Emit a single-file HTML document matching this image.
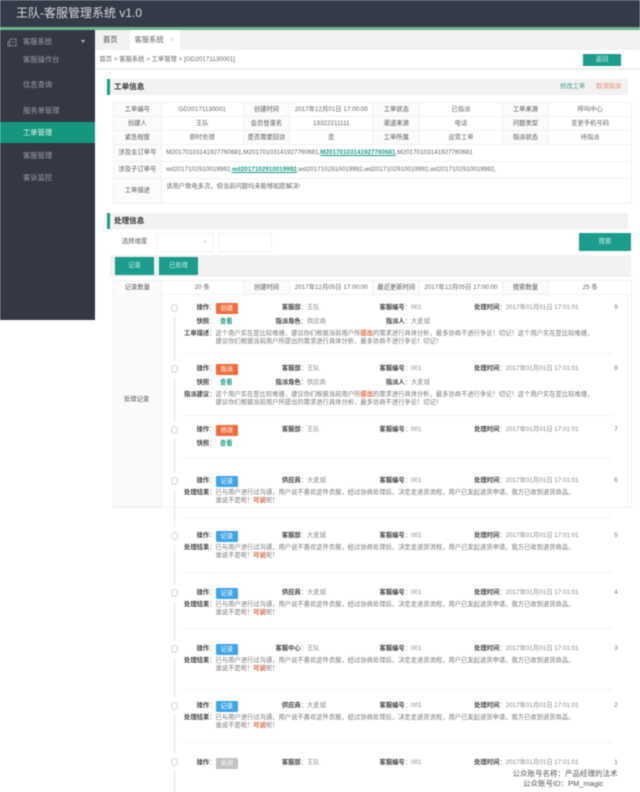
<!DOCTYPE html>
<html lang="zh"><head><meta charset="utf-8"><title>客服管理系统</title>
<style>
html,body{margin:0;padding:0;background:#fff}
#w{position:relative;width:640px;height:792px;overflow:hidden;background:#fff;font-family:"Liberation Sans","Noto Sans CJK SC",sans-serif;font-size:6.3px;line-height:8px;color:#666;filter:blur(.4px)}
#w div,#w p,#w table{position:absolute;margin:0}
.t{white-space:nowrap}
.n{color:#9a9ea6;font-size:7.3px;left:23px;white-space:nowrap}
.bar{left:107px;width:521px;height:16px;background:#f2f2f2}
.bar i{position:absolute;left:0;top:0;width:2.5px;height:16px;background:#1a9b88}
.bar b{position:absolute;left:7px;top:4px;font-size:7.6px;color:#333;white-space:nowrap}
table{border-collapse:collapse;table-layout:fixed;left:113px;width:518px}
td{border:1px solid #f0f0f0;padding:0;text-align:center;font-size:6.3px;line-height:8px;white-space:nowrap;overflow:hidden;color:#666}
td.k{background:#fbfbfb;color:#555}
td.x{text-align:left;padding-left:4.5px}
td b{color:#1a9b88;text-decoration:underline}
.btn{background:#1a9d8c;color:#d6efe9;text-align:center;line-height:18px}
.it{left:0;top:0;width:640px;height:1px}
.it p{white-space:nowrap;color:#777}
.it p b{color:#444}
.it p i{position:absolute;left:100%;top:0;font-style:normal;color:#888}
.c1,.c2,.c3,.c4{text-align:right;left:150px}
.c1{width:65.5px}.c2{width:157px}.c3{width:261px}.c4{width:355.6px}
.r0{top:-4px}.r1{top:9.5px}.r2{top:22px}.r3{top:30px}.rr{top:8px}.rs{top:15.7px}
.tx{left:215.5px;color:#777}
.tg{left:216px;top:-5.5px;width:21.5px;height:11px;line-height:11px;text-align:center;color:#fff;border-radius:1px}
.o{background:#f26b3a}.bl{background:#3fa5ea}.g{background:#c2c2c2}
.sn{left:612px;width:8px;text-align:center;top:-4px;color:#999}
.ck{left:220px;font-weight:bold;color:#1a9b88!important}
.rd{color:#e0643a;font-weight:bold;font-style:normal;position:static!important}
.dot{left:170.5px;width:5.5px;height:5.5px;border:1px solid #cfd7d9;border-radius:50%;background:#fff;box-shadow:0 0 0 4.5px #fff}
.hr{left:183px;width:429px;height:1px;background:#f3f3f3}
</style></head><body><div id="w">

<div style="left:0;top:0;width:640px;height:27px;background:#343a47"></div>
<div style="left:0;top:27px;width:640px;height:3px;background:#6db48a"></div>
<div class="t" style="left:16px;top:6px;font-size:12px;line-height:15px;color:#d8dade">王队-客服管理系统 v1.0</div>

<div style="left:0;top:30px;width:95px;height:290px;background:#333844"></div>
<svg style="position:absolute;left:7px;top:38px" width="10" height="9" viewBox="0 0 10 9"><path d="M1 3.5H3V1H9V8H1Z M3 3.5V8 M5 4H7.5" fill="none" stroke="#8f939c" stroke-width=".8"/></svg>
<div class="n" style="top:37.5px">客服系统</div>
<div style="left:81px;top:40px;width:0;height:0;border-left:2.7px solid transparent;border-right:2.7px solid transparent;border-top:3px solid #b9bcc3"></div>
<div class="n" style="top:55.5px">客服操作台</div>
<div class="n" style="top:81px">信息查询</div>
<div class="n" style="top:106.5px">服务单管理</div>
<div style="left:0;top:122px;width:95px;height:21px;background:#15977f"></div>
<div class="n" style="top:128.5px;color:#e6f4f1">工单管理</div>
<div class="n" style="top:151.5px">客服管理</div>
<div class="n" style="top:173.5px">客诉监控</div>

<div style="left:95px;top:30px;width:545px;height:20px;background:#f2f2f2"></div>
<div class="t" style="left:103px;top:36px;font-size:7.3px;color:#444">首页</div>
<div style="left:130px;top:30px;width:50px;height:20px;background:#fff"></div>
<div class="t" style="left:134.5px;top:36px;font-size:7.3px;color:#666">客服系统</div>
<div class="t" style="left:169.5px;top:36px;font-size:7.3px;color:#ccc">×</div>
<div class="t" style="left:99.5px;top:55.5px;color:#666">首页 &gt; 客服系统 &gt; 工单管理 &gt; [GD20171130001]</div>
<div class="btn" style="left:583px;top:54px;width:38px;height:12px;line-height:12px">返回</div>
<div style="left:95px;top:68px;width:545px;height:2px;background:#eee"></div>

<div class="bar" style="top:79px"><i></i><b>工单信息</b></div>
<div class="t" style="left:560px;top:83px;color:#3c9f90">修改工单</div>
<div class="t" style="left:596px;top:83px;color:#e8876a">取消指派</div>

<table style="top:102px"><colgroup><col style="width:47.7px"><col style="width:82px"><col style="width:46.6px"><col style="width:83px"><col style="width:47px"><col style="width:82.4px"><col style="width:46.6px"><col style="width:82.7px"></colgroup>
<tr style="height:14px"><td class="k">工单编号</td><td>GD20171130001</td><td class="k">创建时间</td><td>2017年12月01日 17:00:00</td><td class="k">工单状态</td><td>已指派</td><td class="k">工单来源</td><td>呼叫中心</td></tr>
<tr style="height:14px"><td class="k">创建人</td><td>王队</td><td class="k">会员登录名</td><td>13322211111</td><td class="k">渠道来源</td><td>电话</td><td class="k">问题类型</td><td>变更手机号码</td></tr>
<tr style="height:14px"><td class="k">紧急程度</td><td>即时处理</td><td class="k">是否需要回访</td><td>是</td><td class="k">工单所属</td><td>运营工单</td><td class="k">指派状态</td><td>待指派</td></tr>
<tr style="height:17px"><td class="k">涉及主订单号</td><td class="x" colspan="7">M20170103141927760681,M20170103141927760681,<b>M20170103141927760681</b>,M20170103141927760681</td></tr>
<tr style="height:17px"><td class="k">涉及子订单号</td><td class="x" colspan="7">wd2017102910019992,<b>wd2017102910019992</b>,wd2017102910019992,wd2017102910019992,wd2017102910019992,</td></tr>
<tr style="height:25px"><td class="k">工单描述</td><td class="x" colspan="7" style="vertical-align:top;padding-top:4px">该用户致电多次，但当前问题均未能够如愿解决!</td></tr>
</table>

<div class="bar" style="top:213px"><i></i><b>处理信息</b></div>
<div class="t" style="left:122px;top:238px;color:#555">选择维度</div>
<div style="left:156px;top:233px;width:56px;height:17px;border:1px solid #f2f2f2"></div>
<div style="left:203px;top:241px;width:0;height:0;border-left:2px solid transparent;border-right:2px solid transparent;border-top:2.5px solid #ccc"></div>
<div style="left:218px;top:233px;width:52px;height:17px;border:1px solid #f2f2f2"></div>
<div class="btn" style="left:579px;top:233px;width:52px;height:18px">搜索</div>
<div style="left:110px;top:255px;width:521px;height:22px;background:#f2f2f2"></div>
<div class="btn" style="left:115px;top:257px;width:39px;height:18px">记录</div>
<div class="btn" style="left:159px;top:257px;width:39px;height:18px">已处理</div>

<table style="top:280px"><colgroup><col style="width:47.7px"><col style="width:82px"><col style="width:46.6px"><col style="width:83px"><col style="width:47px"><col style="width:82.4px"><col style="width:46.6px"><col style="width:82.7px"></colgroup>
<tr style="height:14px"><td class="k">记录数量</td><td>20 条</td><td class="k">创建时间</td><td>2017年12月05日 17:00:00</td><td class="k">最近更新时间</td><td>2017年12月05日 17:00:00</td><td class="k">搜索数量</td><td>25 条</td></tr>
</table>
<div style="left:113px;top:294px;width:47px;height:212px;background:#fafafa;border:1px solid #f0f0f0;border-top:0"></div>
<div class="t" style="left:124px;top:396px;color:#555">处理记录</div>
<div style="left:113px;top:506.5px;width:518px;height:1px;background:#eee"></div>
<div style="left:627px;top:294px;width:1px;height:213px;background:#f0f0f0"></div>
<div style="left:630.5px;top:294px;width:1px;height:213px;background:#f0f0f0"></div>

<div style="left:173.5px;top:312px;width:1.2px;height:480px;background:#d6e2e5"></div>

<div class="hr" style="top:353px"></div><div class="hr" style="top:415px"></div><div class="hr" style="top:457.5px"></div><div class="hr" style="top:516.5px"></div><div class="hr" style="top:571.5px"></div><div class="hr" style="top:628px"></div><div class="hr" style="top:689px"></div><div class="hr" style="top:742px"></div>

<div class="dot" style="top:304px"></div>
<div class="dot" style="top:365px"></div>
<div class="dot" style="top:426px"></div>
<div class="dot" style="top:477px"></div>
<div class="dot" style="top:532px"></div>
<div class="dot" style="top:589px"></div>
<div class="dot" style="top:645px"></div>
<div class="dot" style="top:702px"></div>
<div class="dot" style="top:758px"></div>

<div class="it" style="top:308px">
<p class="c1 r0"><b>操作</b>：</p><div class="tg o">创建</div>
<p class="c2 r0"><b>客服部</b>：<i>王队</i></p><p class="c3 r0"><b>客服编号</b>：<i>001</i></p><p class="c4 r0"><b>处理时间</b>：<i>2017年01月01日 17:01:01</i></p><p class="sn">9</p>
<p class="c1 r1"><b>快照</b>：</p><p class="ck r1">查看</p><p class="c2 r1"><b>指派角色</b>：<i>供应商</i></p><p class="c3 r1"><b>指派人</b>：<i>大麦城</i></p>
<p class="c1 r2"><b>工单描述</b>：</p><p class="tx r2">这个用户实在是比较难缠，建议你们根据当前用户所<em class="rd">提出</em>的需求进行具体分析，最多协商不进行争论！切记！这个用户实在是比较难缠，</p>
<p class="tx r3">建议你们根据当前用户所提出的需求进行具体分析，最多协商不进行争论！切记！</p>
</div>

<div class="it" style="top:369px">
<p class="c1 r0"><b>操作</b>：</p><div class="tg o">指派</div>
<p class="c2 r0"><b>客服部</b>：<i>王队</i></p><p class="c3 r0"><b>客服编号</b>：<i>001</i></p><p class="c4 r0"><b>处理时间</b>：<i>2017年01月01日 17:01:01</i></p><p class="sn">8</p>
<p class="c1 r1"><b>快照</b>：</p><p class="ck r1">查看</p><p class="c2 r1"><b>指派角色</b>：<i>供应商</i></p><p class="c3 r1"><b>指派人</b>：<i>大麦城</i></p>
<p class="c1 r2"><b>指派建议</b>：</p><p class="tx r2">这个用户实在是比较难缠，建议你们根据当前用户所<em class="rd">提出</em>的需求进行具体分析，最多协商不进行争论！切记！这个用户实在是比较难缠，</p>
<p class="tx r3">建议你们根据当前用户所提出的需求进行具体分析，最多协商不进行争论！切记！</p>
</div>

<div class="it" style="top:430px">
<p class="c1 r0"><b>操作</b>：</p><div class="tg o">修改</div>
<p class="c2 r0"><b>客服部</b>：<i>王队</i></p><p class="c3 r0"><b>客服编号</b>：<i>001</i></p><p class="c4 r0"><b>处理时间</b>：<i>2017年01月01日 17:01:01</i></p><p class="sn">7</p>
<p class="c1 r1"><b>快照</b>：</p><p class="ck r1">查看</p>
</div>

<div class="it" style="top:481px">
<p class="c1 r0"><b>操作</b>：</p><div class="tg bl">记录</div>
<p class="c2 r0"><b>供应商</b>：<i>大麦城</i></p><p class="c3 r0"><b>客服编号</b>：<i>001</i></p><p class="c4 r0"><b>处理时间</b>：<i>2017年01月01日 17:01:01</i></p><p class="sn">6</p>
<p class="c1 rr"><b>处理结果</b>：</p><p class="tx rr">已与用户进行过沟通，用户说不喜欢这件衣服，经过协商处理后，决定走退货流程，用户已发起退货申请，我方已收到退货商品，</p>
<p class="tx rs">谁说不是呢！<em class="rd">可说</em>呢！</p>
</div>

<div class="it" style="top:536px">
<p class="c1 r0"><b>操作</b>：</p><div class="tg bl">记录</div>
<p class="c2 r0"><b>客服部</b>：<i>大麦城</i></p><p class="c3 r0"><b>客服编号</b>：<i>001</i></p><p class="c4 r0"><b>处理时间</b>：<i>2017年01月01日 17:01:01</i></p><p class="sn">5</p>
<p class="c1 rr"><b>处理结果</b>：</p><p class="tx rr">已与用户进行过沟通，用户说不喜欢这件衣服，经过协商处理后，决定走退货流程，用户已发起退货申请，我方已收到退货商品，</p>
<p class="tx rs">谁说不是呢！<em class="rd">可说</em>呢！</p>
</div>

<div class="it" style="top:593px">
<p class="c1 r0"><b>操作</b>：</p><div class="tg bl">记录</div>
<p class="c2 r0"><b>供应商</b>：<i>大麦城</i></p><p class="c3 r0"><b>客服编号</b>：<i>001</i></p><p class="c4 r0"><b>处理时间</b>：<i>2017年01月01日 17:01:01</i></p><p class="sn">4</p>
<p class="c1 rr"><b>处理结果</b>：</p><p class="tx rr">已与用户进行过沟通，用户说不喜欢这件衣服，经过协商处理后，决定走退货流程，用户已发起退货申请，我方已收到退货商品，</p>
<p class="tx rs">谁说不是呢！<em class="rd">可说</em>呢！</p>
</div>

<div class="it" style="top:649px">
<p class="c1 r0"><b>操作</b>：</p><div class="tg bl">记录</div>
<p class="c2 r0"><b>客服中心</b>：<i>王队</i></p><p class="c3 r0"><b>客服编号</b>：<i>001</i></p><p class="c4 r0"><b>处理时间</b>：<i>2017年01月01日 17:01:01</i></p><p class="sn">3</p>
<p class="c1 rr"><b>处理结果</b>：</p><p class="tx rr">已与用户进行过沟通，用户说不喜欢这件衣服，经过协商处理后，决定走退货流程，用户已发起退货申请，我方已收到退货商品，</p>
<p class="tx rs">谁说不是呢！<em class="rd">可说</em>呢！</p>
</div>

<div class="it" style="top:706px">
<p class="c1 r0"><b>操作</b>：</p><div class="tg bl">记录</div>
<p class="c2 r0"><b>供应商</b>：<i>大麦城</i></p><p class="c3 r0"><b>客服编号</b>：<i>001</i></p><p class="c4 r0"><b>处理时间</b>：<i>2017年01月01日 17:01:01</i></p><p class="sn">2</p>
<p class="c1 rr"><b>处理结果</b>：</p><p class="tx rr">已与用户进行过沟通，用户说不喜欢这件衣服，经过协商处理后，决定走退货流程，用户已发起退货申请，我方已收到退货商品，</p>
<p class="tx rs">谁说不是呢！<em class="rd">可说</em>呢！</p>
</div>

<div class="it" style="top:763px">
<p class="c1 r0"><b>操作</b>：</p><div class="tg g">关闭</div>
<p class="c2 r0"><b>客服部</b>：<i>王队</i></p><p class="c3 r0"><b>客服编号</b>：<i>001</i></p><p class="c4 r0"><b>处理时间</b>：<i>2017年01月01日 17:01:01</i></p><p class="sn">1</p>
</div>

<div class="t" style="left:512.5px;top:768.5px;font-size:7.5px;line-height:9px;color:#555;text-shadow:0 0 2px #fff,0 0 2px #fff">公众账号名称：产品经理的法术</div>
<div class="t" style="left:523px;top:778.5px;font-size:7.5px;line-height:9px;color:#555;text-shadow:0 0 2px #fff,0 0 2px #fff">公众账号ID：PM_magic</div>

</div></body></html>
